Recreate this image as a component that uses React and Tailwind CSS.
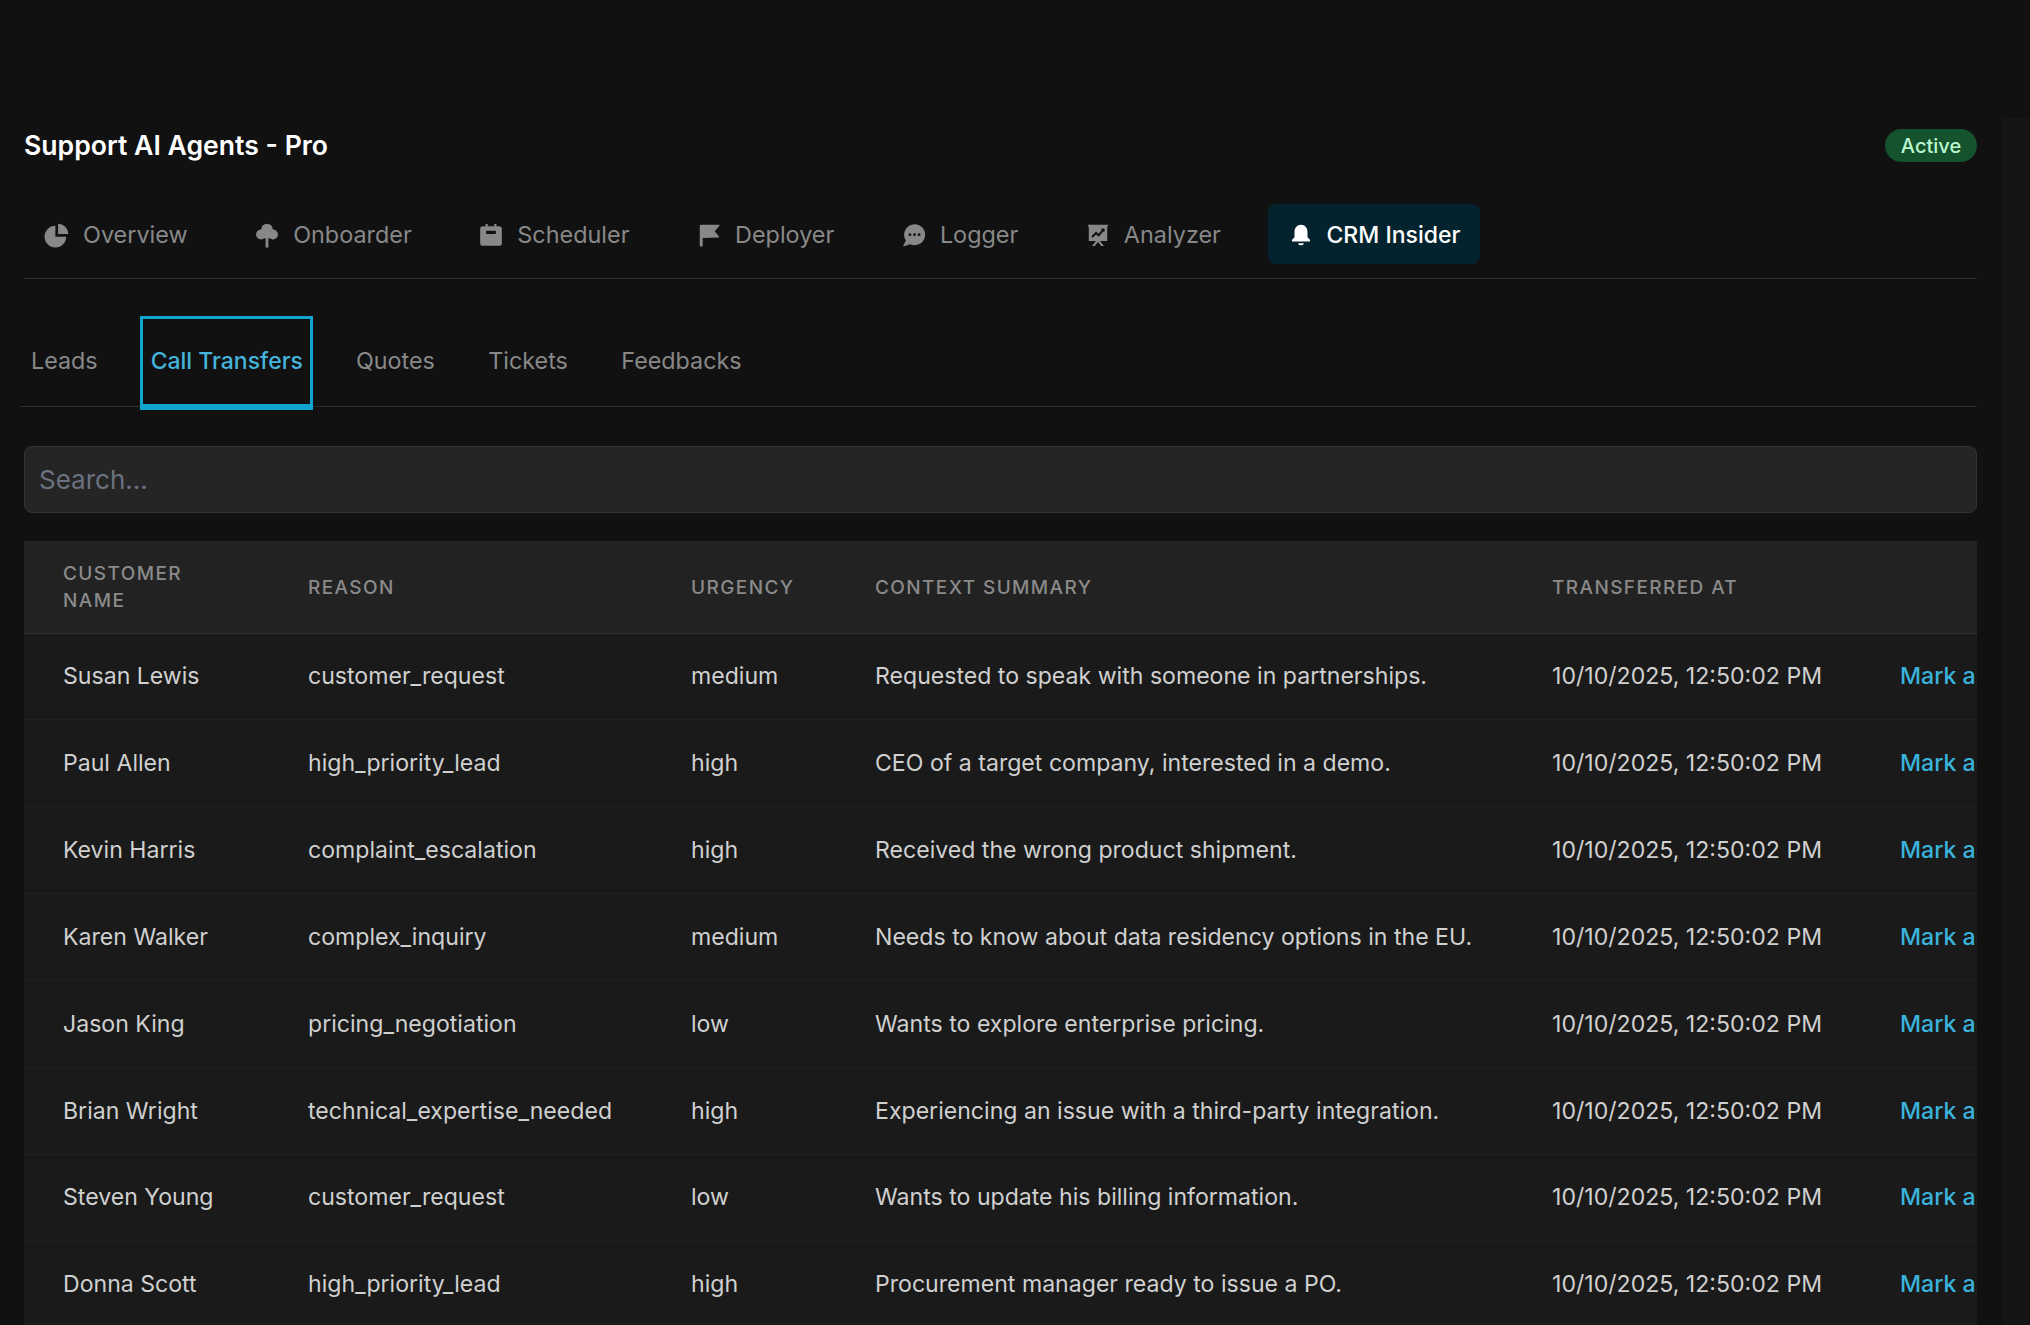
import React from "react";

const base = { viewBox: "0 0 24 24", fill: "currentColor" };
const cut = "#111112";

const PieIcon = ({ className }) => (
  <svg {...base} className={className}>
    <path d="M10.5 3.5A10 10 0 1 0 20.5 13.5H10.5Z" />
    <path d="M13 1.5A9.5 9.5 0 0 1 22.5 11H13Z" />
  </svg>
);
const TreeIcon = ({ className }) => (
  <svg {...base} className={className}>
    <circle cx="12" cy="6.8" r="5.3" />
    <circle cx="6.5" cy="11.5" r="4.6" />
    <circle cx="17.5" cy="11.5" r="4.6" />
    <rect x="6.5" y="8" width="11" height="7" rx="3" />
    <path d="M10.7 13h2.6v9.5a1.3 1.3 0 0 1-2.6 0Z" />
  </svg>
);
const CalendarIcon = ({ className }) => (
  <svg {...base} className={className}>
    <path d="M7 1.8h2V4h6V1.8h2V4h2.5A2.5 2.5 0 0 1 22 6.5v13a2.5 2.5 0 0 1-2.5 2.5h-15A2.5 2.5 0 0 1 2 19.500v-13A2.500 2.500 0 0 1 4.500 4H7Z" />
    <rect x="7.500" y="8" width="9" height="3" rx="0.6" fill={cut} />
  </svg>
);
const FlagIcon = ({ className }) => (
  <svg {...base} className={className}>
    <path d="M3.500 3.500a1 1 0 0 1 1-1H21.200a.6.6 0 0 1 .45 1L17.300 8.500l4 4.800a.6.6 0 0 1-.45 1L6.200 14.800V21.500a1.350 1.350 0 0 1-2.700 0Z" />
  </svg>
);
const ChatIcon = ({ className }) => (
  <svg {...base} className={className}>
    <path d="M12.500 2a9.700 9.700 0 1 1-4 18.500L2.800 22.300a.5.5 0 0 1-.6-.65L4.500 17A9.700 9.700 0 0 1 12.500 2Z" />
    <circle cx="8.300" cy="11.700" r="1.300" fill={cut} />
    <circle cx="12.500" cy="11.700" r="1.300" fill={cut} />
    <circle cx="16.700" cy="11.700" r="1.300" fill={cut} />
  </svg>
);
const AnalyzerIcon = ({ className }) => (
  <svg {...base} className={className}>
    <path d="M2.500 2.500H21.500L20.500 5V17.500H3.500V5Z" />
    <path d="M10.500 17L6.500 22.200H9L12 18.500L15 22.200H17.500L13.500 17Z" />
    <path d="M6.500 13.800L10.200 10.200L12.600 12.300L17.500 6.500" fill="none" stroke={cut} strokeWidth="2" />
    <path d="M14.500 6.200H18V9.700Z" fill={cut} />
  </svg>
);
const BellIcon = ({ className }) => (
  <svg {...base} className={className}>
    <path d="M12 2.500C8.200 2.500 6 5.500 6 9.500V14L3.800 16.300C3.300 16.900 3.700 18 4.500 18H19.500C20.300 18 20.700 16.900 20.200 16.300L18 14V9.500C18 5.500 15.800 2.500 12 2.500Z" />
    <path d="M9.300 19.500H14.700A2.800 2.800 0 0 1 9.300 19.500Z" />
  </svg>
);

const nav = [
  ["Overview", PieIcon],
  ["Onboarder", TreeIcon],
  ["Scheduler", CalendarIcon],
  ["Deployer", FlagIcon],
  ["Logger", ChatIcon],
  ["Analyzer", AnalyzerIcon],
];

const tabs = ["Leads", "Call Transfers", "Quotes", "Tickets", "Feedbacks"];

const rows = [
  ["Susan Lewis", "customer_request", "medium", "Requested to speak with someone in partnerships."],
  ["Paul Allen", "high_priority_lead", "high", "CEO of a target company, interested in a demo."],
  ["Kevin Harris", "complaint_escalation", "high", "Received the wrong product shipment."],
  ["Karen Walker", "complex_inquiry", "medium", "Needs to know about data residency options in the EU."],
  ["Jason King", "pricing_negotiation", "low", "Wants to explore enterprise pricing."],
  ["Brian Wright", "technical_expertise_needed", "high", "Experiencing an issue with a third-party integration."],
  ["Steven Young", "customer_request", "low", "Wants to update his billing information."],
  ["Donna Scott", "high_priority_lead", "high", "Procurement manager ready to issue a PO."],
];

const th = "pl-[39px] pr-[40px] text-left text-[19px] font-medium tracking-[1.4px] leading-[27px] text-[#8a8a8a]";
const thOne = "pl-[39px] pr-[40px] pt-[2px] text-left text-[19px] font-medium tracking-[1.4px] leading-[27px] text-[#8a8a8a]";
const td = "pl-[39px] pr-[40px] text-[23.1px] text-[#d0d0d0] whitespace-nowrap";

export default function App() {
  return (
    <div className="h-screen overflow-hidden bg-[#111112] font-['Inter',sans-serif] flex">
      <div className="w-[2002px] shrink-0 pl-6 pr-[25px] pt-[129px]">
        <div className="flex items-center justify-between h-[33px]">
          <h1 className="pt-[1px] text-[26.6px] font-semibold text-white">Support AI Agents - Pro</h1>
          <span className="h-[33px] w-[92px] rounded-full bg-[#14532d] text-[#bbf7d0] text-[20px] font-medium flex items-center justify-center">Active</span>
        </div>
        <div className="mt-[42px] h-[75px] border-b border-[#2e2e2e] flex items-start gap-[26.6px]">
          {nav.map(([label, Icon]) => (
            <div key={label} className="h-[60px] px-5 pt-[1px] flex items-center gap-[13px] text-[23.4px] text-[#888888]">
              <Icon className="w-[26px] h-[26px]" />
              <span>{label}</span>
            </div>
          ))}
          <div className="h-[60px] px-5 pt-[2px] flex items-center gap-[13px] text-[23px] font-medium text-white bg-[#03242f] rounded-lg">
            <BellIcon className="w-[26px] h-[26px]" />
            <span>CRM Insider</span>
          </div>
        </div>
        <div className="mt-[37px] h-[91px] -ml-[4px] border-b border-[#2e2e2e] flex items-start gap-[31.5px] text-[23.3px] text-[#888888]">
          {tabs.map((t) =>
            t === "Call Transfers" ? (
              <div key={t} className="h-[94px] px-[7.5px] flex items-center border-[3px] border-b-[6px] border-[#10a5cf] text-[23px] font-medium text-[#45b3da]">{t}</div>
            ) : (
              <div key={t} className="h-[94px] px-2 flex items-center border-[3px] border-b-[6px] border-transparent">{t}</div>
            )
          )}
        </div>
        <div className="mt-[39px] h-[67px] rounded-lg border border-[#333333] bg-[#252525] px-[14px] flex items-center text-[26px] text-[#6b7280]">Search...</div>
        <div className="mt-[28px] overflow-hidden">
          <table className="table-fixed w-[2200px] border-collapse bg-[#1a1a1a]">
            <colgroup>
              <col className="w-[245px]" />
              <col className="w-[383px]" />
              <col className="w-[184px]" />
              <col className="w-[677px]" />
              <col className="w-[348px]" />
              <col />
            </colgroup>
            <thead>
              <tr className="h-[92px] bg-[#222222] border-b border-[#2e2e2e]">
                <th className={th}>CUSTOMER NAME</th>
                <th className={thOne}>REASON</th>
                <th className={thOne}>URGENCY</th>
                <th className={thOne}>CONTEXT SUMMARY</th>
                <th className={thOne}>TRANSFERRED AT</th>
                <th className={th}></th>
              </tr>
            </thead>
            <tbody>
              {rows.map((r) => (
                <tr key={r[0]} className="h-[86.9px] border-b border-[#222222]">
                  {r.map((c, i) => (
                    <td key={i} className={td}>{c}</td>
                  ))}
                  <td className={td}>10/10/2025, 12:50:02 PM</td>
                  <td className="pl-[39px] pr-[40px] text-[23.1px] font-medium text-[#3ab3dc] whitespace-nowrap">Mark as Resolved</td>
                </tr>
              ))}
            </tbody>
          </table>
        </div>
      </div>
      <div className="flex-1 mt-[118px] bg-[#151515]" />
    </div>
  );
}
